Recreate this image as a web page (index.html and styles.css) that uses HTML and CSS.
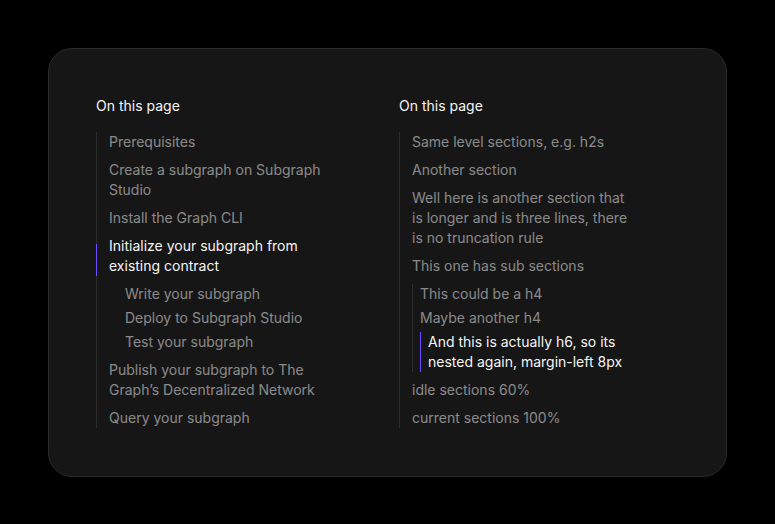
FILE: index.html
```html
<!DOCTYPE html>
<html>
<head>
<meta charset="utf-8">
<link rel="stylesheet" href="styles.css">
</head>
<body>
<div class="card">
  <nav class="toc">
    <div class="toc-title">On this page</div>
    <ul class="toc-list">
      <li class="toc-item">Prerequisites</li>
      <li class="toc-item">Create a subgraph on Subgraph Studio</li>
      <li class="toc-item">Install the Graph CLI</li>
      <li class="toc-item toc-item--current toc-item--offset">Initialize your subgraph from existing contract</li>
      <li class="toc-sub toc-sub--plain">
        <ul class="toc-sublist">
          <li class="toc-item">Write your subgraph</li>
          <li class="toc-item">Deploy to Subgraph Studio</li>
          <li class="toc-item">Test your subgraph</li>
        </ul>
      </li>
      <li class="toc-item">Publish your subgraph to The Graph’s Decentralized Network</li>
      <li class="toc-item">Query your subgraph</li>
    </ul>
  </nav>
  <nav class="toc toc--right">
    <div class="toc-title">On this page</div>
    <ul class="toc-list">
      <li class="toc-item">Same level sections, e.g. h2s</li>
      <li class="toc-item">Another section</li>
      <li class="toc-item">Well here is another section that is longer and is three lines, there is no truncation rule</li>
      <li class="toc-item">This one has sub sections</li>
      <li class="toc-sub">
        <ul class="toc-sublist toc-sublist--lined">
          <li class="toc-item">This could be a h4</li>
          <li class="toc-item">Maybe another h4</li>
          <li class="toc-item toc-item--current toc-item--deep">And this is actually h6, so its nested again, margin-left 8px</li>
        </ul>
      </li>
      <li class="toc-item">idle sections 60%</li>
      <li class="toc-item">current sections 100%</li>
    </ul>
  </nav>
</div>
</body>
</html>
```

FILE: styles.css
```css
* { box-sizing: border-box; }
html, body { margin: 0; padding: 0; background: #000; }
body {
  padding: 48px 48px 48px 48px;
  font-family: Inter, "Noto Sans", sans-serif;
  font-size: 14px;
  line-height: 20px;
}
.card {
  background: #161616;
  border: 1px solid #2a2a2a;
  border-radius: 24px;
  padding: 47px 47px 48px 47px;
  display: grid;
  grid-template-columns: 255px 240px;
  column-gap: 48px;
}
.toc { display: flex; flex-direction: column; gap: 16px; }
.toc-title { color: #f5f5f5; }
.toc-list, .toc-sublist {
  list-style: none;
  margin: 0;
  padding: 0;
}
.toc-list {
  display: flex;
  flex-direction: column;
  gap: 8px;
  border-left: 1px solid #2c2c2c;
  padding-left: 12px;
}
.toc-list > .toc-item { max-width: 228px; }
.toc-item { color: rgba(255,255,255,0.5); position: relative; }
.toc-item--current { color: #f5f5f5; }
.toc-item--offset::before {
  content: "";
  position: absolute;
  left: -13px;
  top: 8px;
  bottom: 0;
  width: 1px;
  background: #6f4cff;
}
.toc-sublist {
  display: flex;
  flex-direction: column;
  gap: 4px;
}
.toc-sub--plain .toc-sublist { padding-left: 16px; }
.toc-sublist--lined {
  border-left: 1px solid #2c2c2c;
  padding-left: 7px;
}
.toc-item--deep {
  border-left: 1px solid #6f4cff;
  padding-left: 7px;
  max-width: 210px;
}
```
